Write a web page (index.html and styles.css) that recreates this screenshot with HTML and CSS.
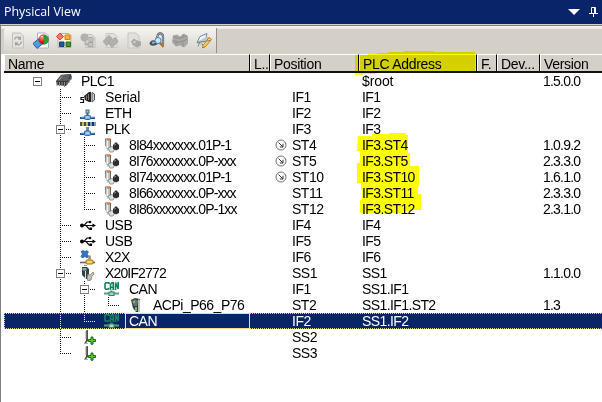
FILE: index.html
```html
<!DOCTYPE html>
<html lang="en">
<head>
<meta charset="utf-8">
<title>Physical View</title>
<link rel="stylesheet" href="styles.css">
</head>
<body>
<svg class="defs" width="0" height="0">
  <defs>
    <radialGradient id="ball" cx=".35" cy=".3" r=".8"><stop offset="0" stop-color="#ff9a8a"/><stop offset=".5" stop-color="#e01d14"/><stop offset="1" stop-color="#900"/></radialGradient>
  </defs>
  <symbol id="plc" viewBox="0 0 16 16"><path d="M5 2 15 1 16 5 10 13 1 12 0 8Z" fill="#34383b"/><path d="M5 2 15 1 11 8 1 8Z" fill="#5b6064"/><path d="M1 9v4M3.500 9v4M6 9v4M8.500 9v5M11 9v3M13 6v4M15 4v3" stroke="#8b8f92"/><path d="M6 3.500 3 7" stroke="#a5a9ac"/></symbol>
  <symbol id="serial" viewBox="0 0 16 16"><path d="M4 8.500H1v2h2.500v3H0" fill="none" stroke="#111" stroke-width="1.200"/><path d="M4 7 9 3h2v10H9L5 11Z" fill="#222"/><path d="M6.500 6.500v4M8.500 5v6" stroke="#999" stroke-width=".800"/><path d="M12 3.500 14.500 5v6L12 13Z" fill="#ccc" stroke="#555"/></symbol>
  <symbol id="net" viewBox="0 0 16 16"><path d="M0 13h15" stroke="#1e4f86" stroke-width="2"/><path d="M7.500 6v4" stroke="#555" stroke-width="2"/><rect x="6" y="5" width="3" height="3" fill="#a8c7df" stroke="#49687f"/><rect x="4.500" y="10.500" width="6" height="4" rx="1" fill="#6cb1ef" stroke="#2c6db1"/><path d="M6 12h3" stroke="#d5edff"/><path d="M1 12h3M11 12h4" stroke="#9cc2e4"/></symbol>
  <symbol id="plk" viewBox="0 0 16 16"><path d="M1 1v4M5 1v4" stroke="#4a5540" stroke-width="2"/><path d="M3 1v4M7 1v4" stroke="#c2b657" stroke-width="2"/><path d="M9 1v4M13 1v4" stroke="#17365d" stroke-width="2"/><path d="M11 1v4M15 1v4" stroke="#6fa5ce" stroke-width="2"/><path d="M0 13h15" stroke="#1e4f86" stroke-width="2"/><path d="M7.500 6v4" stroke="#789" stroke-width="3"/><rect x="4.500" y="10" width="6" height="4.500" rx="1" fill="#6cb1ef" stroke="#2c6db1"/><path d="M6 12h3" stroke="#d5edff"/><path d="M1 12h3M11 12h4" stroke="#9cc2e4"/></symbol>
  <symbol id="drive" viewBox="0 0 16 16"><path d="M1 1 6 1 7 3v9l-3 2-2-3Z" fill="#b6b9ba"/><path d="M3.500 4v7" stroke="#f2f2f2" stroke-width="1.500"/><path d="M6.500 2v10" stroke="#666"/><path d="M1.500 2v7" stroke="#777" stroke-width=".800"/><path d="M3 1.500h3v2H3Z" fill="#f07a22"/><path d="M4 11 8 9.500l3 2-2 3.500H6Z" fill="#dedfdf" stroke="#777" stroke-width=".700"/><path d="M9 8 12 5l3 3v4l-3 1.500L9 12Z" fill="#2c302f"/><path d="m10 8.500 2-1.500" stroke="#8c908d"/></symbol>
  <symbol id="usb" viewBox="0 0 16 16"><path d="M2 8.500h11M4 8.500 7 5h3M6 8.500l3 3.500h2" fill="none" stroke="#111" stroke-width="1.200"/><circle cx="2" cy="8.500" r="2"/><path d="m12.500 6.500 3.500 2-3.500 2Z"/><circle cx="10" cy="5" r="1.300"/><path d="M9.500 10.500h2.500v2.500h-2.500Z"/></symbol>
  <symbol id="x2x" viewBox="0 0 16 16"><path d="m1 2.500 2-1 2 1 2-1 1.500 1.500L7 5l1.500 2L7 9 5 7.500 2.500 9 1 7.500 2.500 5Z" fill="#2877c9" stroke="#174a89" stroke-width=".600"/><path d="M0 13.500h15" stroke="#666" stroke-width="1.600"/><path d="M9.500 6.500v4" stroke="#8b8b80" stroke-width="2.500"/><rect x="6" y="11" width="7" height="4" rx="1" fill="#f5c341" stroke="#a87214"/><path d="M7.500 13h4" stroke="#fff0a0"/></symbol>
  <symbol id="module" viewBox="0 0 16 16"><path d="M2 2h5l2 2v10H6L2 10Z" fill="#2f4049"/><path d="M2.500 3h4v2.500h-4Z" fill="#8fa6b1"/><path d="M5.500 6v8" stroke="#dbe3e6"/><path d="M4 .500h3" stroke="#e4923a"/><path d="m7 13 1-4 2 1 3-3 1 2-2 2-1 4-3 1Z" fill="#c4c0b7" stroke="#77736b" stroke-width=".700"/></symbol>
  <symbol id="can" viewBox="0 0 16 16"><path d="M5 3V1.800H1.800L1 3v4l.800 1.200H4L5 7M6.500 9V3.500L8 1.800h1.200V9M6.500 6.200h2.700M11.500 9V1.500l2.700 6.500V1" fill="none" stroke="#0b875b" stroke-width="1.600"/><path d="M0 12.500h15" stroke="#6c9180" stroke-width="2"/><path d="M7.500 9.500v2" stroke="#777" stroke-width="2"/><rect x="5" y="11" width="5" height="3.500" fill="#a0dcbc" stroke="#348265"/></symbol>
  <symbol id="acp" viewBox="0 0 16 16"><path d="m3 3 4-2 5 1-1 13H8L5 11Z" fill="#343a3b"/><path d="m4 4 3-2 3 2-1 5H6Z" fill="#647a6d"/><path d="M7 10h2v4H7Z" fill="#70c44e"/><path d="m10 2 2 1v12h-2Z" fill="#bbc2bf"/><circle cx="6" cy="5" r="1" fill="#95d06d"/></symbol>
  <symbol id="slot" viewBox="0 0 16 16"><path d="M6 1.500 8 1v11l-2 2-2 .500 2-3Z" fill="#504d48"/><path d="M6 2v8" stroke="#a09c94"/><path d="M4 14.500h4" stroke="#aaa"/><path d="M11 8h2v2.500h2.500v2H13V15.200h-2v-2.700H8.500v-2H11Z" fill="#55cf27" stroke="#146c08"/></symbol>
  <symbol id="arrow" viewBox="0 0 12 12"><circle cx="6" cy="6" r="5" fill="#fff" stroke="#777"/><path d="m3.500 3.500 4.500 4.500M8 5v3H5" fill="none" stroke="#333"/></symbol>
</svg>

<div class="titlebar">
  <span class="title">Physical View</span>
  <svg class="pulldown" width="12" height="6" viewBox="0 0 12 6"><path d="M0 0h12L6 6Z" fill="#fff"/></svg>
  <svg class="pin" width="9" height="10" viewBox="0 0 9 10"><path d="M2.500 6V.500h4V6M0 6.500h9M4.500 7v3M5.500 1v5" fill="none" stroke="#fff"/></svg>
</div>

<div class="panel">
  <div class="toolbar">
    <div class="buttons">
      <svg viewBox="0 0 16 16"><path d="M2.500.500h8l3 3v12h-11Z" fill="#e5e3df" stroke="#c4c1bb"/><path d="M4.500 7c1-3 4-3 6-1V4M11.500 9c-1 4-4 4-6 2v2M11 6.500H8M5 10.500h3" fill="none" stroke="#a6a39e" stroke-width="1.300"/></svg>
      <svg viewBox="0 0 16 16"><path d="M4.500.500h8l3 3v12h-11Z" fill="#fff" stroke="#a8b2c4"/><path d="m0 11 6-5 4 5-6 5Z" fill="#4c9de1" stroke="#2563a9"/><circle cx="10.500" cy="7" r="5" fill="url(#ball)"/><path d="M11 2c6.500 1 6 10 0 10Z" fill="#2b9e39"/><path d="M8 4h2" stroke="#ffd0c8"/></svg>
      <svg viewBox="0 0 16 16"><path d="M4 1h9l2 2v12H2V4Z" fill="#fff7d8" stroke="#bbb294"/><path d="m4 .500 3.500 3.500L4 7.500.500 4Z" fill="#f87575" stroke="#d84040"/><path d="M9 2.500h5V7H9Z" fill="#f7b235" stroke="#cc7f15"/><path d="M3.500 9.500h4.500v4.500H3.500Z" fill="#2357ac" stroke="#153b78"/><path d="M10 9.500h4.500v4.500H10Z" fill="#3d9c34" stroke="#226c22"/></svg>
      <svg viewBox="0 0 16 16"><path d="M5 2h7l3 3v10H6Z" fill="#dfddda" stroke="#c4c1bb"/><circle cx="4.500" cy="5" r="4" fill="#b3b1ad"/><path d="M5 8v4h4M9 5h4v4H9ZM8 10h5v4H8Z" fill="#c7c4be" stroke="#aaa8a3"/></svg>
      <svg viewBox="0 0 16 16"><path d="M3 1h8l3 3v11H3Z" fill="#e2e0dc" stroke="#cac7c1"/><path d="m0 9 6-6 3 3-5 7Zm6 2 6-6 3 4-6 6Z" fill="#b3b0aa" stroke="#a5a29d"/></svg>
      <svg viewBox="0 0 16 16"><path d="M2 .500h8l3 3v12H2Z" fill="#e2e0dc" stroke="#c8c5bf"/><path d="m5 9 3-3 3 2 4 1v4l-4 2-4-2Z" fill="#aaa8a3"/><circle cx="8.500" cy="9.500" r="1.300" fill="#d0cec9"/></svg>
      <svg viewBox="0 0 16 16"><path d="M7 8 9 2c2-2 5-1 5 2v9M9 9c-1 4-9 4-7 1 2-2 8-1 12 3" fill="none" stroke="#46535d" stroke-width="2.200"/><path d="M7 8 9 2c2-2 5-1 5 2v9M3 10c2-1 7 0 11 3" fill="none" stroke="#aebdc6"/><circle cx="9" cy="8" r="3" fill="#c9e9fb" stroke="#4387b9"/><path d="m11 10.500 3.500 4" stroke="#b66f25" stroke-width="2"/></svg>
      <svg viewBox="0 0 16 16"><path d="m1 3 4-1 3 2 4-3 4 3v7l-4 4-4-2-4 1-4-4Z" fill="#aaa8a4"/><path d="m1 4 6 2 8-3M1 8l6 2 8-3M4 13V9M11 14v-4M11 5V2" fill="none" stroke="#918f8b"/></svg>
      <svg viewBox="0 0 16 16"><path d="m4 4 7-3-1 4 5 2-5 3-2 5-2-4-5-1Z" fill="#eef4f5" stroke="#728a92"/><path d="m2 9 9-5 2 1-8 8Z" fill="#b9c8cb"/><path d="m7 13 6-8 2.500 2-6 7-3 1.500Z" fill="#ffd249" stroke="#ba7916"/><path d="m2 14 2-5M1 10l13-2" stroke="#778a90"/></svg>
    </div>
  </div>

  <div class="row head">
    <div>Name</div><div>L..</div><div>Position</div><div>PLC Address</div><div>F.</div><div>Dev...</div><div>Version</div>
  </div>

  <div class="tree">
    <div class="row"><div class="name"><i class="g root"><b></b></i><svg class="icon"><use href="#plc"/></svg><span>PLC1</span></div><div class="pos"></div><div class="addr root-text">$root</div><div class="ver">1.5.0.0</div></div>
    <div class="row"><div class="name"><i class="g"></i><i class="g v h"></i><svg class="icon"><use href="#serial"/></svg><span class="serial">Serial</span></div><div class="pos">IF1</div><div class="addr">IF1</div></div>
    <div class="row"><div class="name"><i class="g"></i><i class="g v h"></i><svg class="icon"><use href="#net"/></svg><span>ETH</span></div><div class="pos">IF2</div><div class="addr">IF2</div></div>
    <div class="row"><div class="name"><i class="g"></i><i class="g v h"><b></b></i><svg class="icon"><use href="#plk"/></svg><span>PLK</span></div><div class="pos">IF3</div><div class="addr">IF3</div></div>
    <div class="row"><div class="name"><i class="g"></i><i class="g v"></i><i class="g v h"></i><svg class="icon"><use href="#drive"/></svg><span class="part">8I84xxxxxxx.01P-1</span></div><div class="pos"><svg class="mark"><use href="#arrow"/></svg>ST4</div><div class="addr">IF3.ST4</div><div class="ver">1.0.9.2</div></div>
    <div class="row"><div class="name"><i class="g"></i><i class="g v"></i><i class="g v h"></i><svg class="icon"><use href="#drive"/></svg><span class="part">8I76xxxxxxx.0P-xxx</span></div><div class="pos"><svg class="mark"><use href="#arrow"/></svg>ST5</div><div class="addr">IF3.ST5</div><div class="ver">2.3.3.0</div></div>
    <div class="row"><div class="name"><i class="g"></i><i class="g v"></i><i class="g v h"></i><svg class="icon"><use href="#drive"/></svg><span class="part">8I74xxxxxxx.01P-1</span></div><div class="pos"><svg class="mark"><use href="#arrow"/></svg>ST10</div><div class="addr">IF3.ST10</div><div class="ver">1.6.1.0</div></div>
    <div class="row"><div class="name"><i class="g"></i><i class="g v"></i><i class="g v h"></i><svg class="icon"><use href="#drive"/></svg><span class="part">8I66xxxxxxx.0P-xxx</span></div><div class="pos">ST11</div><div class="addr">IF3.ST11</div><div class="ver">2.3.3.0</div></div>
    <div class="row"><div class="name"><i class="g"></i><i class="g v"></i><i class="g v h end"></i><svg class="icon"><use href="#drive"/></svg><span class="part">8I86xxxxxxx.0P-1xx</span></div><div class="pos">ST12</div><div class="addr">IF3.ST12</div><div class="ver">2.3.1.0</div></div>
    <div class="row"><div class="name"><i class="g"></i><i class="g v h"></i><svg class="icon"><use href="#usb"/></svg><span>USB</span></div><div class="pos">IF4</div><div class="addr">IF4</div></div>
    <div class="row"><div class="name"><i class="g"></i><i class="g v h"></i><svg class="icon"><use href="#usb"/></svg><span>USB</span></div><div class="pos">IF5</div><div class="addr">IF5</div></div>
    <div class="row"><div class="name"><i class="g"></i><i class="g v h"></i><svg class="icon"><use href="#x2x"/></svg><span>X2X</span></div><div class="pos">IF6</div><div class="addr">IF6</div></div>
    <div class="row"><div class="name"><i class="g"></i><i class="g v h"><b></b></i><svg class="icon"><use href="#module"/></svg><span class="mod">X20IF2772</span></div><div class="pos">SS1</div><div class="addr">SS1</div><div class="ver">1.1.0.0</div></div>
    <div class="row"><div class="name"><i class="g"></i><i class="g v"></i><i class="g v h"><b></b></i><svg class="icon"><use href="#can"/></svg><span>CAN</span></div><div class="pos">IF1</div><div class="addr">SS1.IF1</div></div>
    <div class="row"><div class="name"><i class="g"></i><i class="g v"></i><i class="g v"></i><i class="g v h end"></i><svg class="icon"><use href="#acp"/></svg><span>ACPi_P66_P76</span></div><div class="pos">ST2</div><div class="addr">SS1.IF1.ST2</div><div class="ver">1.3</div></div>
    <div class="row selected"><div class="name"><i class="g"></i><i class="g v"></i><i class="g v h end"></i><svg class="icon"><use href="#can"/></svg><span class="edit">CAN</span></div><div class="pos">IF2</div><div class="addr">SS1.IF2</div></div>
    <div class="row"><div class="name"><i class="g"></i><i class="g v h"></i><svg class="icon"><use href="#slot"/></svg></div><div class="pos">SS2</div><div class="addr"></div></div>
    <div class="row"><div class="name"><i class="g"></i><i class="g v h end"></i><svg class="icon"><use href="#slot"/></svg></div><div class="pos">SS3</div><div class="addr"></div></div>
  </div>
</div>

<svg class="marker" width="130" height="170" viewBox="350 50 130 170">
  <path d="M355 55h13v-1h9v-1h11v-1h16v-1h30v1h41v20h-81v1h-19v1h-12v1h-8Z"/>
  <path d="M358 136h14v-2h17v-1h17v2h2v18h2v13h9v20h-1v8h3v16h-10v1h-6v2h-45v-13h2v-10h-1v-7h-4v-20h3v-12h-3Z"/>
</svg>
</body>
</html>
```
FILE: styles.css
```css
* { box-sizing: border-box; }

body {
  margin: 0;
  width: 602px;
  height: 402px;
  overflow: hidden;
  background: #fff;
  color: #000;
  font: 14px/17px "Liberation Sans", Arial, sans-serif;
}

.defs { position: absolute; }

.titlebar {
  display: flex;
  align-items: center;
  height: 24px;
  padding: 0 4px 0 4px;
  background: #0a246a;
  color: #fff;
}

.title {
  flex: 1;
  font: 12.4px/22px "Open Sans", sans-serif;
}

.pulldown { margin-right: 9px; }
.pin { margin-bottom: 1px; }

.panel {
  height: 378px;
  border-top: 1px solid #d4d0c8;
  border-left: 1px solid #808080;
  padding-left: 3px;
}

.toolbar {
  height: 29px;
  margin-left: -3px;
  padding: 3px 0 0 3px;
  background: linear-gradient(#808080 1px, #f7f6f3 1px, #e9e7e2 4px, #d4d0c8 4px);
}

.buttons {
  display: flex;
  gap: 7.200px;
  width: 213px;
  height: 25px;
  padding: 4px 0 0 6px;
  border-right: 1px solid #929089;
  border-radius: 3px 0 0 3px;
  background: linear-gradient(#f5f4f1, #d6d2ca);
}

.buttons svg { flex: none; width: 16px; height: 17px; }

.row {
  display: grid;
  grid-template-columns: 246px 20px 89px 118px 20px 43px 1fr;
  height: 16px;
  white-space: nowrap;
}

.head {
  height: 19px;
  border-bottom: 2px solid #111;
  background: #d4d0c8;
  letter-spacing: -.3px;
}

.head > div {
  padding: 1px 0 0 3px;
  border-top: 1px solid #fff;
  border-left: 1px solid #fff;
  border-right: 1px solid #000;
  line-height: 16px;
  overflow: hidden;
}

.head > div:last-child { border-right: 0; }

.name {
  display: flex;
  grid-column: 1;
  padding-left: 21px;
  letter-spacing: -.5px;
}

.pos {
  display: flex;
  grid-column: 3;
  padding-left: 22px;
  letter-spacing: -.5px;
}

.addr { grid-column: 4; padding-left: 3px; letter-spacing: -.6px; }
.ver { grid-column: 7; padding-left: 3px; letter-spacing: -.8px; }

.root-text, .serial { letter-spacing: -.1px; }

.mark { flex: none; width: 12px; height: 12px; margin: 2px 5px 0 -17px; }

.icon { flex: none; width: 16px; height: 16px; margin: 0 9px 0 7px; }

.g {
  flex: none;
  width: 24px;
  height: 16px;
  padding: 4px 0 0 7px;
  background-repeat: no-repeat;
}

.v {
  background-image: repeating-linear-gradient(#111 0 1px, transparent 1px 2px);
  background-size: 1px 16px;
  background-position: 11px 0;
}

.v.h {
  background-image:
    repeating-linear-gradient(#111 0 1px, transparent 1px 2px),
    repeating-linear-gradient(90deg, #111 0 1px, transparent 1px 2px);
  background-size: 1px 16px, 12px 1px;
  background-position: 11px 0, 11px 8px;
}

.v.h.end { background-size: 1px 9px, 12px 1px; }

.g b {
  display: block;
  width: 9px;
  height: 9px;
  border: 1px solid #808080;
  background: linear-gradient(#000, #000) center / 5px 1px no-repeat #fff;
}

.g.root { padding-left: 8px; }

.part { letter-spacing: -.9px; }
.mod { letter-spacing: -.85px; }

.selected {
  position: relative;
  background: #0a246a;
  color: #fff;
}

.selected .v { filter: invert(1); }

.selected::after {
  content: "";
  position: absolute;
  inset: 0;
  background:
    repeating-linear-gradient(90deg, #e9cf8c 0 1px, #0a246a 1px 2px) top / 100% 1px no-repeat,
    repeating-linear-gradient(90deg, #e9cf8c 0 1px, #0a246a 1px 2px) bottom / 100% 1px no-repeat,
    repeating-linear-gradient(#e9cf8c 0 1px, #0a246a 1px 2px) left / 1px 100% no-repeat;
}

.edit {
  position: relative;
  z-index: 1;
  flex: 1;
  height: 16px;
  margin-left: -4px;
  padding-left: 3px;
  border: 1px solid #ffda8b;
  line-height: 15px;
}

.marker {
  position: absolute;
  left: 350px;
  top: 50px;
  fill: #ff0;
  mix-blend-mode: multiply;
}
```
